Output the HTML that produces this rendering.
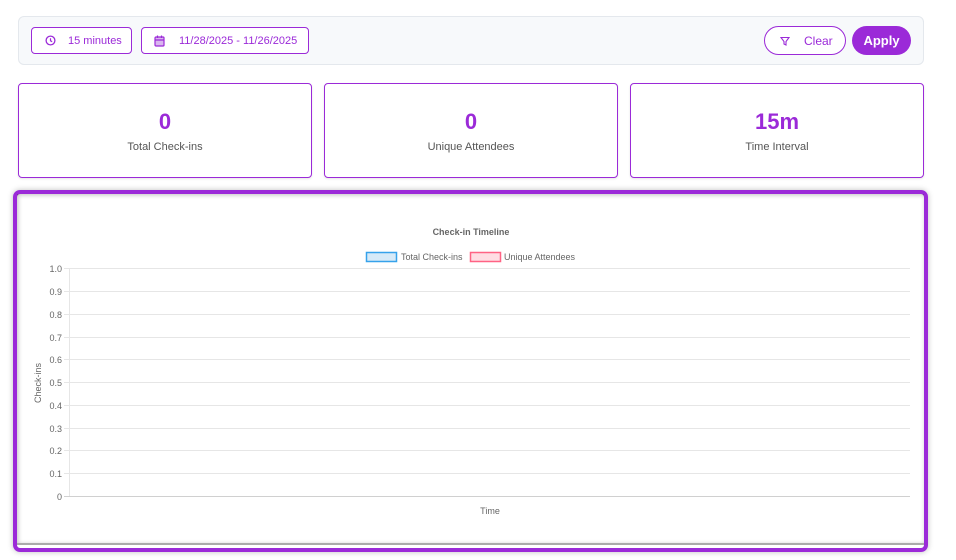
<!DOCTYPE html>
<html><head><style>
*{box-sizing:border-box;margin:0;padding:0}
body{width:956px;height:560px;background:#fff;font-family:"Liberation Sans",sans-serif;position:relative;overflow:hidden}
.a{position:absolute}
.bar{left:18px;top:16px;width:906px;height:49px;background:#f7f9fb;border:1px solid #e4e8ed;border-radius:6px}
.btn{border:1px solid #9b2ad8;border-radius:4px;color:#9b2ad8;font-size:11px;display:flex;align-items:center;background:#fff}
.card{top:83px;width:294px;height:95px;border:1px solid #9b2ad8;border-radius:4px;text-align:center;box-shadow:0 1px 2px rgba(0,0,0,.1)}
.card b{display:block;margin-top:25px;font-size:22px;color:#9b2ad8;line-height:26px}
.card span{display:block;margin-top:6px;font-size:11px;color:#555}
</style></head><body>
<div class="a bar"></div>
<div class="a btn" style="left:31px;top:27px;width:101px;height:27px;padding-left:13px">
<svg width="11" height="11" viewBox="0 0 12 12"><circle cx="6" cy="6" r="4.8" fill="none" stroke="#9b2ad8" stroke-width="1.4"/><path d="M6 3.5V6.3L7.8 7.3" fill="none" stroke="#9b2ad8" stroke-width="1.3"/></svg>
<span style="margin-left:12px">15 minutes</span></div>
<div class="a btn" style="left:141px;top:27px;width:168px;height:27px;padding-left:12px">
<svg width="11" height="12" viewBox="0 0 11 12"><rect x="1" y="2" width="9" height="9" rx="1" fill="#d9b6ef" stroke="#9b2ad8" stroke-width="1.2"/><path d="M1 5H10M3.5 0.5V3M7.5 0.5V3" stroke="#9b2ad8" stroke-width="1.2"/></svg>
<span style="margin-left:14px">11/28/2025 - 11/26/2025</span></div>
<div class="a btn" style="left:764px;top:26px;width:82px;height:29px;border-radius:15px;padding-left:15px;font-size:12px">
<svg width="10" height="10" viewBox="0 0 10 10"><path d="M1 1.5H9L6 5.5V9L4 8V5.5Z" fill="none" stroke="#9b2ad8" stroke-width="1.1"/></svg>
<span style="margin-left:14px">Clear</span></div>
<div class="a" style="left:852px;top:26px;width:59px;height:29px;border-radius:15px;background:#9b2ad8;color:#fff;font-size:13px;font-weight:bold;text-align:center;line-height:29px">Apply</div>
<div class="a card" style="left:18px"><b>0</b><span>Total Check-ins</span></div>
<div class="a card" style="left:324px"><b>0</b><span>Unique Attendees</span></div>
<div class="a card" style="left:630px"><b>15m</b><span>Time Interval</span></div>
<div class="a" style="left:13px;top:190px;width:915px;height:362px;border:4px solid #9b2ad8;border-radius:7px;box-shadow:0 0 6px rgba(0,0,0,.25)"></div>
<div class="a" style="left:17px;top:194px;width:907px;height:351px;box-shadow:inset 1px 1px 5px rgba(0,0,0,.25);border-bottom:2px solid #aaa"></div>
<svg class="a" style="left:0;top:0" width="956" height="560" font-family="Liberation Sans, sans-serif" font-size="9" fill="#666">
<text x="471" y="235" text-anchor="middle" font-weight="bold">Check-in Timeline</text>
<rect x="366.5" y="252.5" width="30" height="9" fill="#d6eaf8" stroke="#36a2eb" stroke-width="1.5"/>
<text x="401" y="260">Total Check-ins</text>
<rect x="470.5" y="252.5" width="30" height="9" fill="#ffdde3" stroke="#ff6384" stroke-width="1.5"/>
<text x="504" y="260">Unique Attendees</text>
<g stroke="#e6e6e6" stroke-width="1">
<line x1="64" x2="910" y1="268.5" y2="268.5"/><line x1="64" x2="910" y1="291.5" y2="291.5"/><line x1="64" x2="910" y1="314.5" y2="314.5"/><line x1="64" x2="910" y1="337.5" y2="337.5"/><line x1="64" x2="910" y1="359.5" y2="359.5"/><line x1="64" x2="910" y1="382.5" y2="382.5"/><line x1="64" x2="910" y1="405.5" y2="405.5"/><line x1="64" x2="910" y1="428.5" y2="428.5"/><line x1="64" x2="910" y1="450.5" y2="450.5"/><line x1="64" x2="910" y1="473.5" y2="473.5"/>
<line x1="69.5" x2="69.5" y1="268" y2="496"/></g>
<line x1="64" x2="910" y1="496.5" y2="496.5" stroke="#d0d0d0"/>
<g text-anchor="end"><text x="62" y="272">1.0</text><text x="62" y="295">0.9</text><text x="62" y="318">0.8</text><text x="62" y="341">0.7</text><text x="62" y="363">0.6</text><text x="62" y="386">0.5</text><text x="62" y="409">0.4</text><text x="62" y="432">0.3</text><text x="62" y="454">0.2</text><text x="62" y="477">0.1</text><text x="62" y="500">0</text></g>
<text x="490" y="514" text-anchor="middle">Time</text>
<text transform="translate(41,383) rotate(-90)" text-anchor="middle">Check-ins</text>
</svg>
</body></html>
